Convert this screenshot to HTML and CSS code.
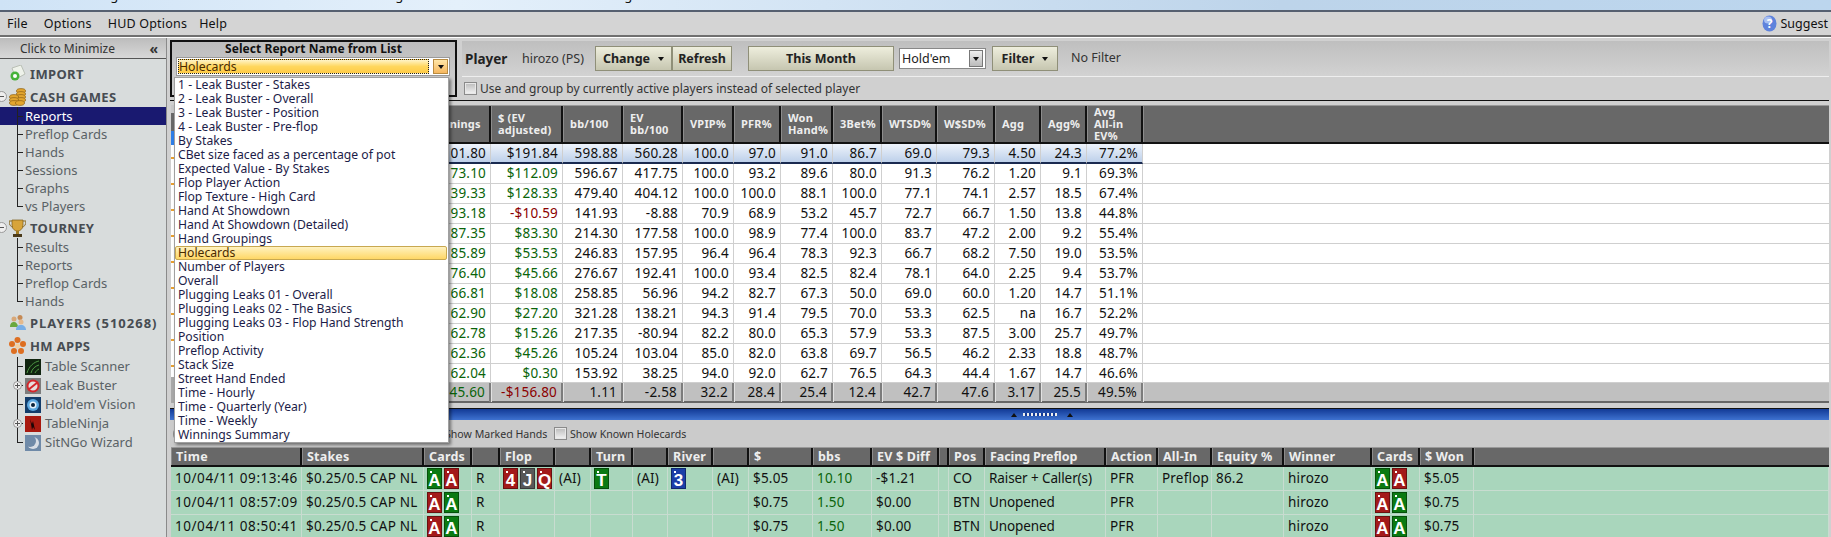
FILE: index.html
```html
<!DOCTYPE html>
<html lang="en">
<head>
<meta charset="utf-8">
<title>Hold'em Manager</title>
<link rel="stylesheet" href="styles.css">
</head>
<body>
<div class="titlebar"><div class="title-text"><span class="t1">Hold'em Manager Professional 1.12.03</span><span class="t2">www.holdemmanager.com</span><span class="t3">CAPTURED: holdemmanager</span></div></div>
<div class="menubar">
  <span class="menu-item">File</span><span class="menu-item">Options</span><span class="menu-item">HUD Options</span><span class="menu-item">Help</span>
  <span class="suggest"><svg width="15" height="17" viewBox="0 0 15 17"><ellipse cx="7.5" cy="8.5" rx="7" ry="8" fill="#5f83dc"/><ellipse cx="6" cy="5" rx="4" ry="3.5" fill="#a9c0f2"/><text x="7.5" y="13" text-anchor="middle" class="q">?</text></svg>Suggest</span>
</div>
<div class="content">
  <aside class="sidebar">
    <div class="side-head"><span>Click to Minimize</span><b class="chev">«</b></div>
    <div class="tree">
      <div class="head first"><svg class="hico" width="17" height="17" viewBox="0 0 17 17"><path d="M3 3l9-3 4 9-9 5z" fill="#eef2ea" stroke="#b9bfb5"/><circle cx="6" cy="11" r="4.5" fill="#46b23a"/><circle cx="6" cy="11" r="2" fill="#fff"/></svg>IMPORT</div>
      <div class="head"><svg class="tog" width="7" height="11" viewBox="0 0 7 11"><circle cx="1.5" cy="5.5" r="5" fill="#eee" stroke="#999"/><path d="M-1 5.5h5" stroke="#555"/></svg><svg class="hico" width="17" height="18" viewBox="0 0 17 18"><g fill="#e2a52e" stroke="#8d6015" stroke-width=".7"><ellipse cx="12" cy="3" rx="4.5" ry="2.4"/><ellipse cx="12" cy="6" rx="4.5" ry="2.4"/><ellipse cx="12" cy="9" rx="4.5" ry="2.4"/><ellipse cx="12" cy="12" rx="4.5" ry="2.4"/><ellipse cx="5" cy="9" rx="4.5" ry="2.4"/><ellipse cx="5" cy="12" rx="4.5" ry="2.4"/><ellipse cx="5" cy="15" rx="4.5" ry="2.4"/><ellipse cx="11" cy="15" rx="4.5" ry="2.4"/></g></svg>CASH GAMES</div>
      <ul class="kids">
        <li class="sel">Reports</li><li>Preflop Cards</li><li>Hands</li><li>Sessions</li><li>Graphs</li><li>vs Players</li>
      </ul>
      <div class="head tourney"><svg class="tog" width="7" height="11" viewBox="0 0 7 11"><circle cx="1.5" cy="5.5" r="5" fill="#eee" stroke="#999"/><path d="M-1 5.5h5" stroke="#555"/></svg><svg class="hico" width="17" height="18" viewBox="0 0 17 18"><path d="M3 1h11v5c0 4-3 6-5.500 6S3 10 3 6z" fill="#d7a43a" stroke="#7d5c18" stroke-width=".7"/><path d="M3 2H0c0 4 2 6 4 6M14 2h3c0 4-2 6-4 6" fill="none" stroke="#8a6a22"/><path d="M7 12h3v3H7z" fill="#a07a22"/><path d="M4 15h9v3H4z" fill="#4b3a1a"/></svg>TOURNEY</div>
      <ul class="kids">
        <li>Results</li><li>Reports</li><li>Preflop Cards</li><li>Hands</li>
      </ul>
      <div class="head players"><svg class="hico" width="17" height="17" viewBox="0 0 17 17"><circle cx="5" cy="5" r="2.500" fill="#d8a878"/><circle cx="11" cy="3.500" r="2.500" fill="#c58a55"/><circle cx="12" cy="8" r="2.500" fill="#e4b98c"/><path d="M1 13c0-4 2-5 4-5s4 2 4 5z" fill="#6aa83e"/><path d="M7 16c0-4 2-5 5-5s5 2 5 5z" fill="#78aee6"/></svg>PLAYERS (510268)</div>
      <div class="head apps"><svg class="hico" width="17" height="17" viewBox="0 0 17 17"><g fill="#dd6f22"><circle cx="8.500" cy="3" r="3"/><circle cx="14" cy="7" r="3"/><circle cx="12" cy="14" r="3"/><circle cx="5" cy="14" r="3"/><circle cx="3" cy="7" r="3"/></g><circle cx="8.500" cy="9" r="2.500" fill="#f4d0a0"/></svg>HM APPS</div>
      <ul class="kids apps-kids">
        <li><svg class="aico" width="16" height="16" viewBox="0 0 16 16"><rect width="16" height="16" fill="#10240f"/><path d="M2 14C4 7 9 3 14 2M6 14c1-4 4-7 8-8M10 14c1-2 2-3 4-4" stroke="#4f9a45" fill="none"/></svg>Table Scanner</li>
        <li><svg class="tplus" width="9" height="9" viewBox="0 0 9 9"><circle cx="4.500" cy="4.500" r="4" fill="#eee" stroke="#999"/><path d="M2 4.500h5M4.500 2v5" stroke="#555"/></svg><svg class="aico" width="16" height="16" viewBox="0 0 16 16"><rect width="16" height="16" fill="#7d7d7d"/><circle cx="8" cy="8" r="5.500" fill="#e6dede" stroke="#d3262b" stroke-width="2"/><path d="M3 12L13 4" stroke="#d3262b" stroke-width="2"/></svg>Leak Buster</li>
        <li><svg class="aico" width="16" height="16" viewBox="0 0 16 16"><rect width="16" height="16" fill="#123c6a"/><circle cx="8" cy="8" r="6" fill="#5ca8e0"/><circle cx="8" cy="8" r="3.500" fill="#e6f2fb"/><circle cx="8" cy="8" r="2" fill="#0b2238"/></svg>Hold'em Vision</li>
        <li><svg class="tplus" width="9" height="9" viewBox="0 0 9 9"><circle cx="4.500" cy="4.500" r="4" fill="#eee" stroke="#999"/><path d="M2 4.500h5M4.500 2v5" stroke="#555"/></svg><svg class="aico" width="16" height="16" viewBox="0 0 16 16"><rect width="16" height="16" fill="#a8190f"/><path d="M5 3l2 5 1-3 2 9-2-3-1 3-1-6z" fill="#1a0606"/></svg>TableNinja</li>
        <li><svg class="aico" width="16" height="16" viewBox="0 0 16 16"><rect width="16" height="16" fill="#6f8aa8"/><circle cx="8" cy="8" r="6" fill="#d8dee6"/><circle cx="5" cy="6" r="6" fill="#6f8aa8"/></svg>SitNGo Wizard</li>
      </ul>
    </div>
  </aside>
  <main class="main">
    <div class="top-area">
      <section class="frame">
        <div class="frame-title">Select Report Name from List</div>
        <div class="combo"><span class="combo-val">Holecards</span><span class="combo-btn"><i class="arrow"></i></span></div>
        <ul class="dropdown">
          <li>1 - Leak Buster - Stakes</li>
          <li>2 - Leak Buster - Overall</li>
          <li>3 - Leak Buster - Position</li>
          <li>4 - Leak Buster - Pre-flop</li>
          <li>By Stakes</li>
          <li>CBet size faced as a percentage of pot</li>
          <li>Expected Value - By Stakes</li>
          <li>Flop Player Action</li>
          <li>Flop Texture - High Card</li>
          <li>Hand At Showdown</li>
          <li>Hand At Showdown (Detailed)</li>
          <li>Hand Groupings</li>
          <li class="dd-sel">Holecards</li>
          <li>Number of Players</li>
          <li>Overall</li>
          <li>Plugging Leaks 01 - Overall</li>
          <li>Plugging Leaks 02 - The Basics</li>
          <li>Plugging Leaks 03 - Flop Hand Strength</li>
          <li>Position</li>
          <li>Preflop Activity</li>
          <li>Stack Size</li>
          <li>Street Hand Ended</li>
          <li>Time - Hourly</li>
          <li>Time - Quarterly (Year)</li>
          <li>Time - Weekly</li>
          <li>Winnings Summary</li>
        </ul>
      </section>
      <div class="tools">
        <div class="toolbar">
          <b class="player-label">Player</b><span class="player-name">hirozo (PS)</span>
          <span class="btn btn-change">Change<i class="arrow"></i></span><span class="btn btn-refresh">Refresh</span>
          <span class="btn btn-month">This Month</span>
          <span class="select"><span>Hold'em</span><span class="select-btn"><i class="arrow"></i></span></span>
          <span class="btn btn-filter">Filter<i class="arrow"></i></span>
          <span class="nofilter">No Filter</span>
        </div>
        <label class="active-row"><i class="check"></i>Use and group by currently active players instead of selected player</label>
      </div>
    </div>

    <div class="report">
      <div class="strip"></div>
      <div class="rrow rhead">
        <span></span><span class="clip">Winnings</span><span>$ (EV<br>adjusted)</span><span>bb/100</span><span>EV<br>bb/100</span><span>VPIP%</span><span>PFR%</span><span>Won<br>Hand%</span><span>3Bet%</span><span>WTSD%</span><span>W$SD%</span><span>Agg</span><span>Agg%</span><span>Avg<br>All-in<br>EV%</span><span></span>
      </div>
      <div class="rrow rdata first-row"><span></span><span>01.80</span><span>$191.84</span><span>598.88</span><span>560.28</span><span>100.0</span><span>97.0</span><span>91.0</span><span>86.7</span><span>69.0</span><span>79.3</span><span>4.50</span><span>24.3</span><span>77.2%</span><span></span></div>
      <div class="rrow rdata"><span></span><span class="pos">73.10</span><span class="pos">$112.09</span><span>596.67</span><span>417.75</span><span>100.0</span><span>93.2</span><span>89.6</span><span>80.0</span><span>91.3</span><span>76.2</span><span>1.20</span><span>9.1</span><span>69.3%</span><span></span></div>
      <div class="rrow rdata"><span></span><span class="pos">39.33</span><span class="pos">$128.33</span><span>479.40</span><span>404.12</span><span>100.0</span><span>100.0</span><span>88.1</span><span>100.0</span><span>77.1</span><span>74.1</span><span>2.57</span><span>18.5</span><span>67.4%</span><span></span></div>
      <div class="rrow rdata"><span></span><span class="pos">93.18</span><span class="neg">-$10.59</span><span>141.93</span><span>-8.88</span><span>70.9</span><span>68.9</span><span>53.2</span><span>45.7</span><span>72.7</span><span>66.7</span><span>1.50</span><span>13.8</span><span>44.8%</span><span></span></div>
      <div class="rrow rdata"><span></span><span class="pos">87.35</span><span class="pos">$83.30</span><span>214.30</span><span>177.58</span><span>100.0</span><span>98.9</span><span>77.4</span><span>100.0</span><span>83.7</span><span>47.2</span><span>2.00</span><span>9.2</span><span>55.4%</span><span></span></div>
      <div class="rrow rdata"><span></span><span class="pos">85.89</span><span class="pos">$53.53</span><span>246.83</span><span>157.95</span><span>96.4</span><span>96.4</span><span>78.3</span><span>92.3</span><span>66.7</span><span>68.2</span><span>7.50</span><span>19.0</span><span>53.5%</span><span></span></div>
      <div class="rrow rdata"><span></span><span class="pos">76.40</span><span class="pos">$45.66</span><span>276.67</span><span>192.41</span><span>100.0</span><span>93.4</span><span>82.5</span><span>82.4</span><span>78.1</span><span>64.0</span><span>2.25</span><span>9.4</span><span>53.7%</span><span></span></div>
      <div class="rrow rdata"><span></span><span class="pos">66.81</span><span class="pos">$18.08</span><span>258.85</span><span>56.96</span><span>94.2</span><span>82.7</span><span>67.3</span><span>50.0</span><span>69.0</span><span>60.0</span><span>1.20</span><span>14.7</span><span>51.1%</span><span></span></div>
      <div class="rrow rdata"><span></span><span class="pos">62.90</span><span class="pos">$27.20</span><span>321.28</span><span>138.21</span><span>94.3</span><span>91.4</span><span>79.5</span><span>70.0</span><span>53.3</span><span>62.5</span><span>na</span><span>16.7</span><span>52.2%</span><span></span></div>
      <div class="rrow rdata"><span></span><span class="pos">62.78</span><span class="pos">$15.26</span><span>217.35</span><span>-80.94</span><span>82.2</span><span>80.0</span><span>65.3</span><span>57.9</span><span>53.3</span><span>87.5</span><span>3.00</span><span>25.7</span><span>49.7%</span><span></span></div>
      <div class="rrow rdata"><span></span><span class="pos">62.36</span><span class="pos">$45.26</span><span>105.24</span><span>103.04</span><span>85.0</span><span>82.0</span><span>63.8</span><span>69.7</span><span>56.5</span><span>46.2</span><span>2.33</span><span>18.8</span><span>48.7%</span><span></span></div>
      <div class="rrow rdata last-row"><span></span><span class="pos">62.04</span><span class="pos">$0.30</span><span>153.92</span><span>38.25</span><span>94.0</span><span>92.0</span><span>62.7</span><span>76.5</span><span>64.3</span><span>44.4</span><span>1.67</span><span>14.7</span><span>46.6%</span><span></span></div>
      <div class="rrow rtotal"><span></span><span class="pos">45.60</span><span class="neg">-$156.80</span><span>1.11</span><span>-2.58</span><span>32.2</span><span>28.4</span><span>25.4</span><span>12.4</span><span>42.7</span><span>47.6</span><span>3.17</span><span>25.5</span><span>49.5%</span><span></span></div>
    </div>

    <div class="splitter"><i class="tri"></i><i class="dots"></i><i class="tri"></i></div>

    <div class="hands-opts">
      <i class="ring"></i>
      <label class="opt opt-marked"><i class="check"></i>Show Marked Hands</label>
      <label class="opt"><i class="check"></i>Show Known Holecards</label>
    </div>

    <div class="hands">
      <div class="hrow hhead">
        <span>Time</span><span>Stakes</span><span>Cards</span><span></span><span>Flop</span><span></span><span>Turn</span><span></span><span>River</span><span></span><span>$</span><span>bbs</span><span>EV $ Diff</span><span></span><span>Pos</span><span>Facing Preflop</span><span>Action</span><span>All-In</span><span>Equity %</span><span>Winner</span><span>Cards</span><span>$ Won</span><span></span>
      </div>
      <div class="hrow">
        <span>10/04/11 09:13:46</span><span>$0.25/0.5 CAP NL</span><span class="cards"><i class="card g">A</i><i class="card r">A</i></span><span>R</span><span class="cards"><i class="card r">4</i><i class="card k">J</i><i class="card r">Q</i></span><span>(AI)</span><span class="cards"><i class="card g">T</i></span><span>(AI)</span><span class="cards"><i class="card b">3</i></span><span>(AI)</span><span>$5.05</span><span class="pos">10.10</span><span>-$1.21</span><span></span><span>CO</span><span>Raiser + Caller(s)</span><span>PFR</span><span>Preflop</span><span>86.2</span><span>hirozo</span><span class="cards"><i class="card g">A</i><i class="card r">A</i></span><span>$5.05</span><span></span>
      </div>
      <div class="hrow">
        <span>10/04/11 08:57:09</span><span>$0.25/0.5 CAP NL</span><span class="cards"><i class="card r">A</i><i class="card g">A</i></span><span>R</span><span></span><span></span><span></span><span></span><span></span><span></span><span>$0.75</span><span class="pos">1.50</span><span>$0.00</span><span></span><span>BTN</span><span>Unopened</span><span>PFR</span><span></span><span></span><span>hirozo</span><span class="cards"><i class="card r">A</i><i class="card g">A</i></span><span>$0.75</span><span></span>
      </div>
      <div class="hrow">
        <span>10/04/11 08:50:41</span><span>$0.25/0.5 CAP NL</span><span class="cards"><i class="card r">A</i><i class="card g">A</i></span><span>R</span><span></span><span></span><span></span><span></span><span></span><span></span><span>$0.75</span><span class="pos">1.50</span><span>$0.00</span><span></span><span>BTN</span><span>Unopened</span><span>PFR</span><span></span><span></span><span>hirozo</span><span class="cards"><i class="card r">A</i><i class="card g">A</i></span><span>$0.75</span><span></span>
      </div>
    </div>
  </main>
</div>
</body>
</html>
```
FILE: styles.css
```css
* { box-sizing: border-box; }
html, body { margin: 0; padding: 0; }
body {
  width: 1831px; height: 537px; overflow: hidden;
  font-family: "Noto Sans", "Liberation Sans", sans-serif;
  font-size: 13px; color: #111; background: #d0d0d0;
  display: flex; flex-direction: column;
}
ul { list-style: none; margin: 0; padding: 0; }
i { font-style: normal; }

.titlebar {
  height: 12px; flex: none; overflow: hidden;
  background: linear-gradient(90deg, #cfe3f6 0%, #e4f0fb 25%, #d3e4f4 45%, #bdd4ea 70%, #bcd6ee 100%);
  border-bottom: 2px solid #566070;
}
.title-text { margin-top: -14px; height: 18px; line-height: 18px; white-space: nowrap; padding-left: 22px; color: #111; font-size: 13px; display: flex; }
.t1 { width: 258px; }
.t2 { width: 190px; }

.menubar {
  height: 25px; flex: none; display: flex; align-items: center; padding-left: 7px;
  background: #d4d4d4; border-bottom: 2px solid #707070;
  font-size: 12.5px; color: #111; letter-spacing: .2px;
}
.menu-item { margin-right: 16px; }
.menu-item:nth-child(3) { margin-right: 12px; }
.suggest { margin-left: auto; margin-right: 3px; display: flex; align-items: center; gap: 3px; letter-spacing: 0; }
.q { font: bold 12px "Noto Sans", sans-serif; fill: #fff; }

.content { flex: 1; display: flex; min-height: 0; border-top: 1px solid #fff; }

/* sidebar */
.sidebar { width: 167px; flex: none; background: #d8dcdc; border-right: 1px solid #8a8a8a; color: #5a6266; overflow: hidden; }
.side-head {
  height: 21px; display: flex; align-items: center; padding-left: 20px;
  background: linear-gradient(#bcbcbc, #d8d8d8); border-bottom: 1px solid #555; color: #333; font-size: 12px;
}
.chev { margin-left: auto; margin-right: 8px; font-size: 14px; color: #333; }
.tree { padding-top: 5px; }
.head {
  height: 19px; margin-top: 4px; padding-left: 9px; display: flex; align-items: center;
  font-weight: bold; font-size: 13px; color: #474c52; letter-spacing: .35px; position: relative; white-space: nowrap;
}
.head.first { margin-top: 0; }
.head.tourney { margin-top: 3px; }
.head.players { letter-spacing: 1px; margin-top: 3px; }
.head.apps { margin-bottom: 1px; }
.hico { flex: none; margin-right: 4px; margin-left: 0; }
.tog { position: absolute; left: 0; top: 4px; }
.kids { padding-top: 1px; }
.kids li {
  height: 18px; line-height: 18px; padding-left: 25px; white-space: nowrap; position: relative; font-size: 13px;
  background-image: linear-gradient(#222, #222), linear-gradient(#222, #222);
  background-repeat: no-repeat;
  background-position: 17px 0, 17px 50%;
  background-size: 1px 100%, 6px 1px;
}
.kids li:last-child { background-size: 1px 50%, 6px 1px; }
.kids li.sel { background-color: #191970; color: #fff; }
.apps-kids li { height: 19px; line-height: 19px; display: flex; align-items: center; }
.aico { margin-right: 4px; flex: none; }
.tplus { position: absolute; left: 13px; top: 5px; }

/* main */
.main { flex: 1; min-width: 0; display: flex; flex-direction: column; padding-left: 3px; padding-right: 2px; background: #d0d0d0; }
.top-area { height: 63px; flex: none; display: flex; border-bottom: 1px solid #111; }
.frame {
  width: 287px; height: 57px; margin-top: 2px; border: 2px solid #111; position: relative; flex: none;
  background: linear-gradient(#bdbdbd, #d2d2d2);
}
.frame-title { text-align: center; font-weight: bold; font-size: 12px; line-height: 13px; height: 13px; letter-spacing: .05px; color: #111; }
.combo {
  position: absolute; left: 4px; top: 15px; width: 274px; height: 19px; background: #fff; border: 1px solid #9a9a9a; display: flex; padding: 1px;
}
.combo-val {
  flex: 1; line-height: 13px; height: 15px; margin-right: 4px; color: #4a2a00; font-size: 12.3px;
  background: linear-gradient(#fff4c8, #ffd75e 50%, #ffcb46); border: 1px dotted #222;
}
.combo-btn { width: 15px; display: flex; align-items: center; justify-content: center; background: linear-gradient(#ffe6a8, #f6b860); border: 1px solid #b98b40; }
.arrow { display: inline-block; width: 0; height: 0; border: 3px solid transparent; border-top: 4px solid #111; border-bottom: 0; }
.dropdown {
  position: absolute; left: 2px; top: 35px; width: 275px; height: 366px; background: #fff; border: 1px solid #a0a0a0; z-index: 5;
  box-shadow: 2px 2px 3px rgba(0, 0, 0, .45);
}
.dropdown li { height: 14px; line-height: 14px; padding-left: 3px; white-space: nowrap; color: #1c1c48; font-size: 12.2px; }
.dropdown .dd-sel { margin: 0 1px 0 0; padding-left: 2px; background: linear-gradient(#fff2c0, #ffd766); border: 1px solid #c8a850; border-radius: 2px; line-height: 12px; color: #4a2a00; }

.tools { flex: 1; padding-left: 5px; min-width: 0; }
.toolbar {
  height: 36px; margin-top: 3px; display: flex; align-items: center; padding-left: 3px;
  background: linear-gradient(#bfbfbf, #d2d2d2); border-bottom: 1px solid #eee; color: #222;
}
.player-label { font-size: 13.5px; width: 57px; }
.player-name { width: 73px; font-size: 12.5px; color: #333; }
.btn {
  height: 25px; display: flex; align-items: center; justify-content: center; font-weight: bold; font-size: 12.5px; color: #222;
  background: linear-gradient(#eeeedd, #c6c6b0); border: 1px solid #8f8f78;
}
.btn .arrow { margin-left: 8px; }
.btn-change { width: 77px; }
.btn-refresh { width: 60px; margin-right: 16px; }
.btn-month { width: 146px; margin-right: 5px; }
.select { width: 87px; height: 21px; background: #fff; border: 1px solid #888; display: flex; align-items: center; padding: 1px 2px; margin-right: 6px; font-size: 12.5px; justify-content: space-between; }
.select-btn { width: 14px; height: 17px; border: 1px solid #777; background: linear-gradient(#eee, #bbb); display: flex; align-items: center; justify-content: center; }
.btn-filter { width: 66px; margin-right: 13px; }
.nofilter { font-size: 12.5px; color: #333; margin-top: -2px; }
.active-row { display: flex; align-items: center; height: 23px; padding-left: 2px; font-size: 12px; color: #333; }
.check { display: inline-block; width: 13px; height: 13px; flex: none; margin-right: 3px; background: linear-gradient(#bbb, #f4f4f4); border: 1px solid #8a8a8a; box-shadow: inset 0 0 0 1px #e8e8e8; }

/* report */
.report { margin: 4px 0 0 1px; flex: none; position: relative; background: #fff; font-size: 13.5px; letter-spacing: .2px; }
.strip {
  position: absolute; left: 0; top: 0; width: 6px; height: 298px; z-index: 1;
  background:
    linear-gradient(#c8c8c8 0 8px, #686868 8px 26px, #2f7fe8 26px 40px) 0 0/100% 40px no-repeat,
    repeating-linear-gradient(#fff 0 12px, #e9a030 12px 14px, #fff 14px 26px) 0 40px/100% 232px no-repeat,
    #a8a8a8;
}
.rrow {
  display: grid;
  grid-template-columns: 253px 67px 72px 60px 60px 51px 47px 52px 49px 55px 58px 46px 46px 56px 1fr;
}
.rhead { height: 39px; background: #686868; border-top: 1px solid #999; border-bottom: 2px solid #111; color: #eee; font-weight: bold; font-size: 11px; line-height: 12px; letter-spacing: .2px; }
.rhead span { display: flex; align-items: center; padding-left: 6px; border-right: 2px solid #111; border-left: 1px solid #8c8c8c; }
.rhead span:last-child { border-right: 0; }
.rhead .clip { padding-left: 3px; }
.rdata { height: 20px; border-bottom: 1px solid #cfcfcf; line-height: 19px; background: #fff; }
.rdata span { text-align: right; padding-right: 4px; border-right: 1px solid #cfcfcf; }
.rdata span:last-child { border-right: 0; }
.first-row span:not(:last-child) { line-height: 17px; padding-top: 1px; border-bottom: 2px solid #1a2a50; }
.first-row span:not(:last-child):not(:first-child) { background: linear-gradient(#eef3fb, #bdd0ea); }
.last-row { height: 19px; }
.pos { color: #0a640a; }
.neg { color: #8b0000; }
.rtotal { height: 20px; background: #c0c0c0; line-height: 19px; border-bottom: 2px solid #666; }
.rtotal span { text-align: right; padding-right: 4px; border-right: 2px solid #7c7c7c; border-left: 1px solid #e2e2e2; }
.rtotal span:last-child { border-right: 0; }
.splitter {
  margin-top: 5px; height: 12px; flex: none; display: flex; align-items: center; padding-left: 841px; gap: 6px;
  border-top: 1px solid #111; background: linear-gradient(#123a96, #3e72d0);
}
.tri { width: 0; height: 0; border: 3px solid transparent; border-bottom: 4px solid #111; border-top: 0; }
.dots { width: 34px; height: 3px; margin-right: 4px; background: repeating-linear-gradient(90deg, #eee 0 2px, #123a96 2px 4px); }

.hands-opts { height: 27px; flex: none; display: flex; align-items: center; padding-left: 3px; background: #cbcbcb; font-size: 10.6px; color: #333; }
.ring { width: 5px; height: 12px; margin-right: 251px; border: 1px solid #8a8a8a; border-right: 0; border-radius: 5px 0 0 5px; background: #e8e8e8; }
.opt { display: flex; align-items: center; white-space: nowrap; }
.opt-marked { width: 125px; }
.hands { flex: 1; min-height: 0; overflow: hidden; margin-left: 1px; background: #a9d6bc; font-size: 13.5px; letter-spacing: .2px; }
.hrow {
  display: grid; height: 24px; line-height: 22px; border-bottom: 1px solid #c8dcd0;
  grid-template-columns: 131px 122px 48px 28px 55px 36px 42px 35px 45px 36px 64px 59px 67px 10px 36px 121px 52px 54px 72px 88px 48px 54px 1fr;
}
.hrow span { padding-left: 4px; border-right: 1px solid #c8dcd0; white-space: nowrap; overflow: hidden; }
.hrow span:first-child { letter-spacing: .55px; }
.hrow span:nth-child(16) { letter-spacing: -.1px; }
.hhead { height: 20px; line-height: 18px; background: #686868; border-top: 1px solid #999; border-bottom: 2px solid #111; color: #eee; font-weight: bold; font-size: 12.5px; letter-spacing: .2px; }
.hhead span { border-right: 2px solid #111; border-left: 1px solid #8c8c8c; }
.hhead span:first-child { letter-spacing: .4px; }
.hhead span:last-child { border-right: 0; }
.cards { display: flex; gap: 2px; padding-left: 3px !important; padding-top: 1px; }
.card {
  width: 15px; height: 21px; display: flex; align-items: flex-end; justify-content: center;
  color: #fff; font: bold 17px/15px "Liberation Sans", sans-serif; border: 1px solid rgba(0, 0, 0, .35); flex: none;
  background-image: radial-gradient(circle at 3px 3px, #fff 0 1.2px, transparent 1.5px);
  letter-spacing: 0;
}
.card.g { background-color: #0b7a12; }
.card.r { background-color: #a31a1a; }
.card.k { background-color: #585858; }
.card.b { background-color: #1a3fa8; }
```
